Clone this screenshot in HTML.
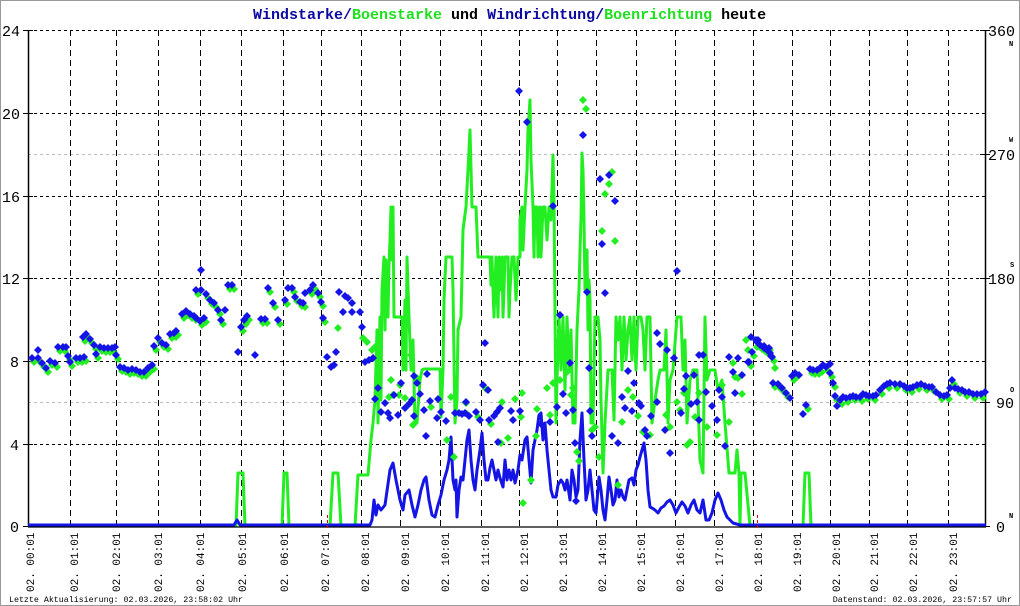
<!DOCTYPE html>
<html><head><meta charset="utf-8"><style>
html,body{margin:0;padding:0;background:#fff}
svg{display:block}
text{font-family:"Liberation Mono",monospace}
</style></head><body>
<svg width="1020" height="606" viewBox="0 0 1020 606" xmlns="http://www.w3.org/2000/svg">
<defs>
<marker id="db" markerUnits="userSpaceOnUse" markerWidth="10" markerHeight="10" refX="4.5" refY="4.5" overflow="visible"><path d="M4.5 0.5L8.5 4.5 4.5 8.5 0.5 4.5z" fill="#1414e6"/></marker>
<marker id="dg" markerUnits="userSpaceOnUse" markerWidth="10" markerHeight="10" refX="4.5" refY="4.5" overflow="visible"><path d="M4.5 0.5L8.5 4.5 4.5 8.5 0.5 4.5z" fill="#22ee22"/></marker>
</defs>
<rect x="0.5" y="0.5" width="1019" height="605" fill="#fff" stroke="#999"/>
<text x="253" y="19" font-size="15" font-weight="bold" fill="#000"><tspan fill="#0a0aa0">Windstarke/</tspan><tspan fill="#1ee01e">Boenstarke</tspan> und <tspan fill="#0a0aa0">Windrichtung/</tspan><tspan fill="#1ee01e">Boenrichtung</tspan> heute</text>

<!-- gray direction gridlines -->
<g stroke="#bbb" stroke-width="1" stroke-dasharray="3,3">
<line x1="28" y1="154.5" x2="986" y2="154.5"/><line x1="28" y1="402.5" x2="986" y2="402.5"/>
</g>
<!-- horizontal grid -->
<g stroke="#000" stroke-width="1" stroke-dasharray="3,3">
<line x1="28" y1="30.5" x2="986" y2="30.5"/><line x1="28" y1="113.5" x2="986" y2="113.5"/>
<line x1="28" y1="196.5" x2="986" y2="196.5"/><line x1="28" y1="278.5" x2="986" y2="278.5"/>
<line x1="28" y1="361.5" x2="986" y2="361.5"/><line x1="28" y1="444.5" x2="986" y2="444.5"/>
</g>
<!-- vertical grid -->
<g stroke="#000" stroke-width="1" stroke-dasharray="6,4">
<line x1="70.5" y1="30" x2="70.5" y2="526"/><line x1="116.5" y1="30" x2="116.5" y2="526"/><line x1="158.5" y1="30" x2="158.5" y2="526"/><line x1="200.5" y1="30" x2="200.5" y2="526"/><line x1="241.5" y1="30" x2="241.5" y2="526"/><line x1="283.5" y1="30" x2="283.5" y2="526"/><line x1="321.5" y1="30" x2="321.5" y2="526"/><line x1="361.5" y1="30" x2="361.5" y2="526"/><line x1="400.5" y1="30" x2="400.5" y2="526"/><line x1="440.5" y1="30" x2="440.5" y2="526"/><line x1="481.5" y1="30" x2="481.5" y2="526"/><line x1="519.5" y1="30" x2="519.5" y2="526"/><line x1="557.5" y1="30" x2="557.5" y2="526"/><line x1="596.5" y1="30" x2="596.5" y2="526"/><line x1="636.5" y1="30" x2="636.5" y2="526"/><line x1="675.5" y1="30" x2="675.5" y2="526"/><line x1="714.5" y1="30" x2="714.5" y2="526"/><line x1="753.5" y1="30" x2="753.5" y2="526"/><line x1="792.5" y1="30" x2="792.5" y2="526"/><line x1="830.5" y1="30" x2="830.5" y2="526"/><line x1="869.5" y1="30" x2="869.5" y2="526"/><line x1="907.5" y1="30" x2="907.5" y2="526"/><line x1="948.5" y1="30" x2="948.5" y2="526"/>
</g>
<!-- axes -->
<g stroke="#000" stroke-width="1.5">
<line x1="28.5" y1="30" x2="28.5" y2="527"/><line x1="985.5" y1="30" x2="985.5" y2="527"/>
</g>
<g stroke="#000" stroke-width="1">
<line x1="23" y1="30.5" x2="33" y2="30.5"/><line x1="23" y1="113.5" x2="33" y2="113.5"/><line x1="23" y1="196.5" x2="33" y2="196.5"/><line x1="23" y1="278.5" x2="33" y2="278.5"/><line x1="23" y1="361.5" x2="33" y2="361.5"/><line x1="23" y1="444.5" x2="33" y2="444.5"/><line x1="23" y1="526.5" x2="33" y2="526.5"/>
<line x1="980" y1="30.5" x2="990" y2="30.5"/><line x1="980" y1="154.5" x2="990" y2="154.5"/><line x1="980" y1="278.5" x2="990" y2="278.5"/><line x1="980" y1="402.5" x2="990" y2="402.5"/><line x1="980" y1="526.5" x2="990" y2="526.5"/>
</g>
<g font-family="Liberation Sans,sans-serif" font-size="15" fill="#000">
<text x="2" y="36">24</text><text x="2" y="119">20</text><text x="2" y="202">16</text><text x="2" y="284">12</text><text x="10" y="367">8</text><text x="10" y="450">4</text><text x="10" y="532">0</text>
<text x="988" y="36">360</text><text x="988" y="160">270</text><text x="988" y="284">180</text><text x="996" y="408">90</text><text x="996" y="532">0</text>
</g>
<g font-family="Liberation Sans,sans-serif" font-size="7" font-weight="bold" fill="#000">
<text x="1009" y="46">N</text><text x="1009" y="142">W</text><text x="1010" y="267">S</text><text x="1010" y="392">O</text><text x="1009" y="518">N</text>
</g>

<!-- green gust line -->
<polyline fill="none" stroke="#22ee22" stroke-width="3" stroke-linejoin="round" points="28,526 236,526 238,473 243,473 245,526 282,526 284,473 287,473 289,526 330,526 333,473 338,473 341,526 355,526 358,475 368,475 371,440 373,423 375,400 377,330 378,423 380,317 381,400 382,290 384,257 385,330 386,260 388,317 389,265 390,240 391,207 392,260 393,207 394,317 402,317 403,370 405,300 406,370 407,257 409,317 411,370 413,340 415,423 417,423 420,380 422,370 424,369 440,369 441,417 443,370 444,300 446,257 452,257 453,290 455,423 457,400 458,330 461,317 463,230 466,207 468,170 469,150 470,130 472,207 476,207 478,257 490,257 491,285 492,257 493,290 494,317 496,257 498,317 499,257 500,290 502,257 503,317 504,290 505,257 508,257 509,317 510,290 512,257 514,257 516,300 518,257 520,257 520,220 522,207 523,250 525,207 527,170 528,130 530,100 531,160 533,207 534,257 535,207 537,207 538,257 540,207 541,257 543,207 545,207 547,240 549,207 551,220 553,155 554,200 556,423 557,380 559,317 561,370 563,317 565,390 567,317 569,370 571,330 573,423 575,423 577,330 579,290 580,250 581,220 582,153 583,170 584,220 585,290 586,260 587,250 588,330 589,280 590,300 591,423 593,423 595,317 598,317 600,340 601,400 603,473 605,423 608,370 612,370 614,420 616,317 618,340 620,317 622,370 624,317 626,360 628,330 630,317 632,360 634,317 636,370 638,317 641,317 643,330 645,370 647,317 650,317 652,423 655,400 658,380 660,370 664,370 666,330 668,423 670,380 673,370 676,330 677,317 681,317 683,370 685,340 687,423 690,380 693,370 697,370 700,460 703,473 705,317 707,380 710,370 715,370 718,390 722,380 725,423 729,473 735,473 737,450 739,473 740,526 741,473 745,473 750,526 803,526 805,473 809,473 811,526 986,526"/>
<!-- blue wind line -->
<polyline fill="none" stroke="#1414e6" stroke-width="3" stroke-linejoin="round" points="28,525 234,525 237,520 240,525 370,525 372,520 374,500 376,515 378,505 381,510 385,505 390,470 393,463 396,480 400,500 403,510 405,495 409,490 412,505 415,517 418,505 421,490 424,480 426,477 429,500 432,515 435,517 438,505 441,495 444,480 447,470 449,460 451,437 453,480 455,490 456,480 457,517 459,490 461,477 463,480 465,460 467,440 469,430 471,460 473,480 475,490 477,470 480,450 482,433 484,460 486,480 488,480 490,468 492,460 494,470 496,480 498,470 500,478 503,487 505,460 507,480 509,470 511,480 513,470 515,483 518,470 520,455 522,460 525,440 527,437 529,460 531,483 533,450 535,440 537,430 539,415 541,413 543,440 545,423 547,450 549,470 551,490 553,497 556,497 558,485 561,480 563,483 565,490 567,480 570,500 572,470 574,480 576,497 578,490 580,440 582,413 584,460 586,500 588,490 590,470 592,490 594,510 596,513 598,490 599,477 601,490 603,510 605,520 607,500 609,477 611,490 613,505 615,500 617,480 619,497 621,490 623,497 625,500 627,490 629,480 632,478 634,485 636,470 638,465 640,457 642,450 644,443 646,460 648,490 650,507 652,508 655,510 658,513 661,508 664,506 667,502 670,500 673,505 676,513 679,507 682,502 685,506 688,513 691,505 694,500 697,510 700,513 703,500 706,520 709,520 712,513 715,500 718,493 721,500 724,510 727,517 730,520 733,523 740,525 986,525"/>
<line x1="28" y1="527" x2="986" y2="527" stroke="#000" stroke-width="1.2"/>
<line x1="327.5" y1="515" x2="327.5" y2="530" stroke="#e00" stroke-dasharray="3,2"/>
<line x1="757.5" y1="515" x2="757.5" y2="530" stroke="#e00" stroke-dasharray="3,2"/>

<!-- green direction points (shifted duplicates left/right) -->
<g transform="translate(2,4)">
<polyline fill="none" stroke="none" marker-start="url(#dg)" marker-mid="url(#dg)" marker-end="url(#dg)" points="32,358 38,358 42,363 46,368 50,361 55,363 58,347 63,347 68,356 70,362 76,358 80,358 84,357 83,337 86,334 90,339 94,345 96,354 100,347 104,348 108,348 112,348 116,355 120,367 124,368 128,370 132,369 136,370 140,372 144,372 148,368 152,365 154,346 158,338 162,343 166,345 170,334 174,333 176,331 182,314 186,311 190,314 194,316 200,321 204,318 196,290 206,294 210,300 214,303 218,310 221,320 228,285 232,285 241,327 244,320 247,316 261,319 265,319 268,288 273,303 278,320 285,300 292,288 295,297 300,302 303,303 310,290 313,285 318,293 321,302 323,318"/>
<polyline fill="none" stroke="none" marker-start="url(#dg)" marker-mid="url(#dg)" marker-end="url(#dg)" points="749,362 752,352 757,342 760,345 764,348 767,350 770,353 772,357 773,383 778,384 782,388 786,393 792,376 795,373 806,405 810,369 813,370 817,370 820,368 826,367 830,373 833,383 835,396 840,400 846,398 853,396 860,397 866,395 873,396 880,390 887,384 895,384 904,386 910,388 917,385 925,386 932,387 940,395 947,395 952,380 958,389 965,392 973,394 981,394"/>
</g>
<polyline fill="none" stroke="none" marker-start="url(#dg)" marker-mid="url(#dg)" marker-end="url(#dg)" points="338,328 363,338 367,342 372,350 375,347 389,397 393,395 399,395 405,398 411,355 400,385 391,380 405,408 417,378 413,425 431,407 447,440 451,397 454,457 466,403 467,414 478,417 486,389 491,424 502,402 501,443 508,438 515,399 521,417 522,393 523,503 531,480 537,409 547,388 536,436 583,100 586,109 612,172 609,184 605,194 602,231 615,241 553,383 563,357 567,372 571,395 573,388 550,415 560,380 577,452 579,461 592,430 595,427 599,457 618,485 622,422 628,390 633,397 638,416 643,432 650,435 666,415 670,427 677,402 680,410 684,393 687,445 690,442 695,417 699,393 707,427 717,435 722,385 729,422 733,363 735,377 738,378 742,394 746,340 748,350 757,347 770,350 775,368"/>
<!-- blue direction points -->
<polyline fill="none" stroke="none" marker-start="url(#db)" marker-mid="url(#db)" marker-end="url(#db)" points="32,358 38,358 38,350 42,363 46,368 50,361 55,363 58,347 63,347 66,347 68,356 70,362 76,358 80,358 84,357 83,337 86,334 90,339 94,345 96,354 100,347 104,348 108,348 112,348 115,347 116,355 120,367 124,368 128,370 132,369 136,370 140,372 144,372 148,368 152,365 154,346 158,338 162,343 166,345 170,334 174,333 176,331 182,314 186,311 190,314 194,316 196,318 200,321 204,318 201,270 196,290 201,290 206,294 210,300 214,303 218,310 221,320 225,310 228,285 232,285 238,352 241,327 244,320 247,316 255,355 261,319 265,319 268,288 273,303 278,320 285,300 288,288 292,288 295,297 300,302 303,303 305,293 310,290 313,285 318,293 321,302 323,318 327,357 331,367 334,365 336,352 339,292 345,296 348,298 352,303 343,312 352,312 360,312 362,327 365,362 369,360 373,358 378,388 375,399 381,412 385,403 388,413 394,395 390,418 398,415 401,383 405,408 409,404 412,400 414,416 414,376 417,383 420,394 424,410 426,436 427,374 430,401 438,399 441,412 437,418 446,421 455,413 459,413 462,414 465,413 466,402 469,416 476,412 480,420 485,343 483,385 488,390 489,420 494,416 497,412 500,408 498,442 511,411 513,420 520,411 519,91 527,122 553,206 583,135 600,179 609,175 615,201 602,244 605,293 587,292 560,315 570,363 563,394 557,407 566,413 573,410 550,422 541,424 589,368 590,411 592,436 575,443 576,501 612,436 618,443 622,397 628,371 634,383 625,408 632,411 639,403 641,406 645,430 647,436 651,416 657,402 657,333 660,344 667,350 674,358 677,271 684,389 686,376 694,375 691,404 697,402 681,413 670,453 665,430 699,420 706,392 703,355 699,355 712,406 717,420 719,390 722,397 725,446 729,357 738,358 733,372 735,393 742,375 748,362 751,337 756,340 758,340 764,346 769,348 771,356 749,362 752,352 757,342 760,345 764,348 767,350 770,353 772,357 773,383 778,384 782,388 786,393 790,398 792,376 795,373 799,375 806,405 803,414 810,369 813,370 817,370 820,368 823,365 826,367 830,364 830,373 833,383 835,396 837,406 840,400 843,397 846,398 850,397 853,396 856,397 860,397 863,394 866,395 869,396 873,396 876,395 880,390 884,386 887,384 890,383 895,384 900,384 904,386 907,388 910,388 913,387 917,385 921,384 925,386 929,387 932,387 936,392 940,395 944,396 947,395 950,388 952,380 955,388 958,389 962,390 965,392 969,392 973,394 977,394 981,394 985,392"/>

<!-- x labels -->
<g font-size="11" fill="#000">
<text transform="translate(34,592) rotate(-90)">02. 00:01</text>
<text transform="translate(78,592) rotate(-90)">02. 01:01</text>
<text transform="translate(120,592) rotate(-90)">02. 02:01</text>
<text transform="translate(162,592) rotate(-90)">02. 03:01</text>
<text transform="translate(204,592) rotate(-90)">02. 04:01</text>
<text transform="translate(246,592) rotate(-90)">02. 05:01</text>
<text transform="translate(288,592) rotate(-90)">02. 06:01</text>
<text transform="translate(329,592) rotate(-90)">02. 07:01</text>
<text transform="translate(369,592) rotate(-90)">02. 08:01</text>
<text transform="translate(409,592) rotate(-90)">02. 09:01</text>
<text transform="translate(449,592) rotate(-90)">02. 10:01</text>
<text transform="translate(489,592) rotate(-90)">02. 11:01</text>
<text transform="translate(528,592) rotate(-90)">02. 12:01</text>
<text transform="translate(567,592) rotate(-90)">02. 13:01</text>
<text transform="translate(606,592) rotate(-90)">02. 14:01</text>
<text transform="translate(645,592) rotate(-90)">02. 15:01</text>
<text transform="translate(684,592) rotate(-90)">02. 16:01</text>
<text transform="translate(723,592) rotate(-90)">02. 17:01</text>
<text transform="translate(762,592) rotate(-90)">02. 18:01</text>
<text transform="translate(801,592) rotate(-90)">02. 19:01</text>
<text transform="translate(840,592) rotate(-90)">02. 20:01</text>
<text transform="translate(878,592) rotate(-90)">02. 21:01</text>
<text transform="translate(917,592) rotate(-90)">02. 22:01</text>
<text transform="translate(957,592) rotate(-90)">02. 23:01</text>
</g>
<g font-size="8.3" fill="#000">
<text x="9" y="602">Letzte Aktualisierung: 02.03.2026, 23:58:02 Uhr</text>
<text x="1012" y="602" text-anchor="end">Datenstand: 02.03.2026, 23:57:57 Uhr</text>
</g>
</svg>
</body></html>
